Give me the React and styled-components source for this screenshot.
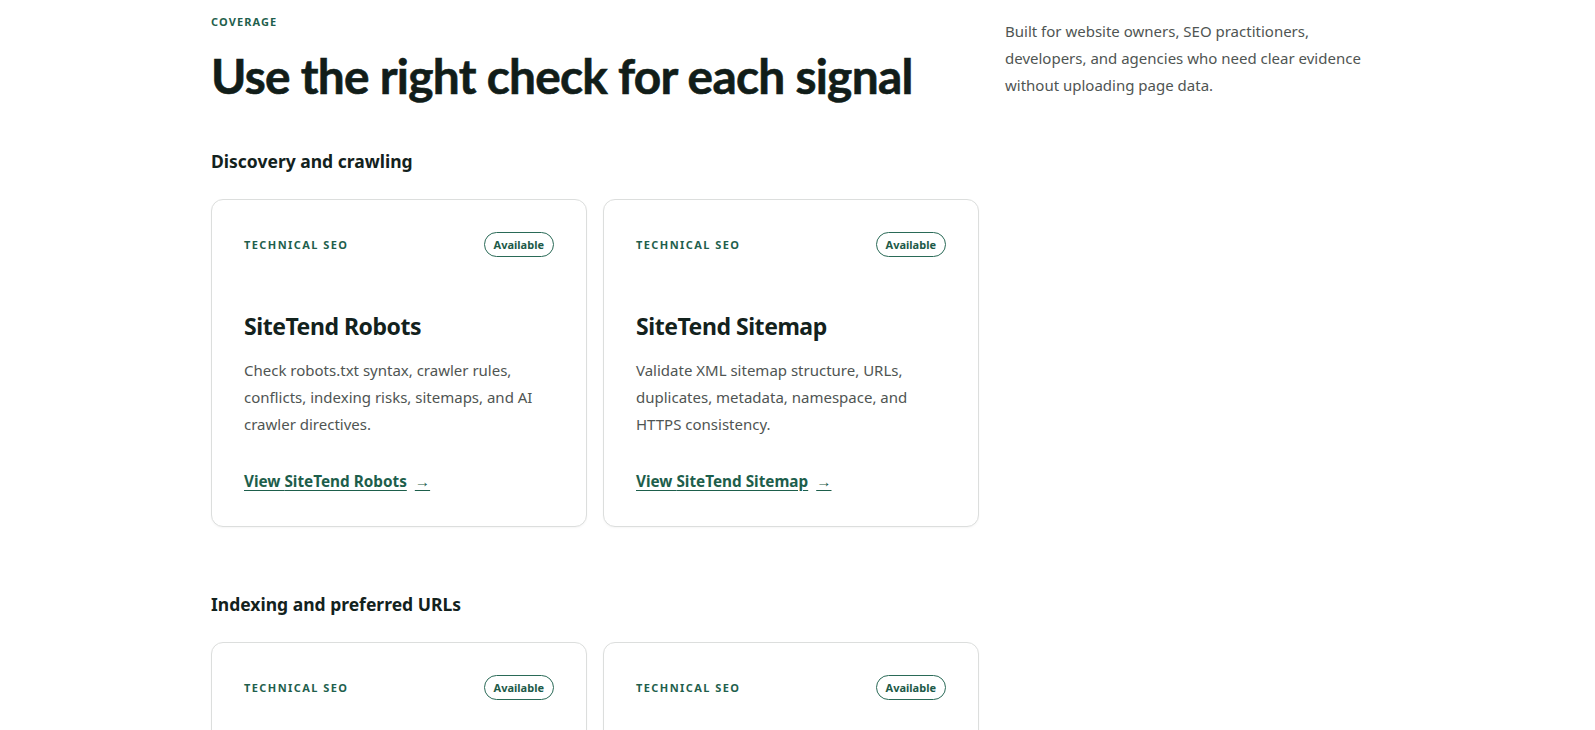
import React from 'react';
import styled, { createGlobalStyle } from 'styled-components';

const GlobalStyle = createGlobalStyle`
  html, body {
    margin: 0;
    padding: 0;
    background: #ffffff;
  }
  body {
    font-family: "Noto Sans", "Open Sans", sans-serif;
    color: #13221d;
  }
`;

const Page = styled.main`
  padding: 14px 0 80px 211px;
`;

const Header = styled.header`
  display: flex;
  align-items: flex-start;
  gap: 26px;
`;

const HeaderMain = styled.div`
  width: 768px;
`;

const Eyebrow = styled.div`
  font-size: 11px;
  font-weight: 700;
  letter-spacing: .1em;
  text-transform: uppercase;
  color: #1f5f4d;
  line-height: 16px;
`;

const Heading = styled.h1`
  margin: 16px 0 0;
  font-family: Lato, "Noto Sans", sans-serif;
  font-size: 47.8px;
  font-weight: 700;
  letter-spacing: -.015em;
  line-height: 60px;
  white-space: nowrap;
  color: #111d19;
  -webkit-text-stroke: .6px #111d19;
`;

const Intro = styled.p`
  margin: 4px 0 0;
  width: 370px;
  font-size: 15px;
  line-height: 27px;
  color: #4f5553;
`;

const Group = styled.section`
  margin-top: ${p => p.$first ? '43px' : '65px'};
  width: 768px;
`;

const GroupTitle = styled.h2`
  margin: 0 0 26px;
  font-size: 17.5px;
  font-weight: 700;
  line-height: 24px;
  color: #13221d;
`;

const Grid = styled.div`
  display: grid;
  grid-template-columns: repeat(2, 1fr);
  gap: 16px;
`;

const Card = styled.article`
  border: 1px solid #dcdedd;
  border-radius: 12px;
  padding: 32px 32px 33px;
  background: #fff;
  box-shadow: 0 1px 2px rgba(0, 0, 0, .04);
`;

const CardTop = styled.div`
  display: flex;
  align-items: center;
  justify-content: space-between;
`;

const Category = styled.span`
  font-size: 11px;
  font-weight: 700;
  letter-spacing: .13em;
  text-transform: uppercase;
  color: #1f5f4d;
`;

const Badge = styled.span`
  display: inline-flex;
  align-items: center;
  height: 23px;
  padding: 0 9px;
  border: 1px solid #2a6a57;
  border-radius: 999px;
  font-size: 11px;
  font-weight: 700;
  color: #1d5a48;
`;

const CardTitle = styled.h3`
  margin: 54px 0 0;
  font-size: 23px;
  font-weight: 700;
  letter-spacing: -.02em;
  line-height: 30px;
  color: #13221d;
`;

const CardText = styled.p`
  margin: 16px 0 0;
  font-size: 15px;
  line-height: 27px;
  color: #4f5553;
`;

const CardLink = styled.a`
  display: inline-block;
  margin-top: 31px;
  font-size: 15.3px;
  font-weight: 700;
  line-height: 24px;
  color: #1d5e4b;
  text-decoration: underline;
  text-underline-offset: 3px;
  cursor: pointer;
`;

const Arrow = styled.span`
  display: inline-block;
  margin-left: 8px;
  text-decoration: underline;
  text-underline-offset: 3px;
  font-weight: 400;
`;

const groups = [
  {
    title: 'Discovery and crawling',
    tools: [
      {
        name: 'SiteTend Robots',
        text: 'Check robots.txt syntax, crawler rules, conflicts, indexing risks, sitemaps, and AI crawler directives.',
      },
      {
        name: 'SiteTend Sitemap',
        text: 'Validate XML sitemap structure, URLs, duplicates, metadata, namespace, and HTTPS consistency.',
      },
    ],
  },
  {
    title: 'Indexing and preferred URLs',
    tools: [
      {
        name: 'SiteTend Canonical',
        text: 'Review canonical tags, preferred URL signals, redirects, and conflicting directives.',
      },
      {
        name: 'SiteTend Indexability',
        text: 'Check meta robots, X-Robots-Tag headers, status codes, and noindex signals.',
      },
    ],
  },
];

function ToolCard({ tool }) {
  return (
    <Card>
      <CardTop>
        <Category>Technical SEO</Category>
        <Badge>Available</Badge>
      </CardTop>
      <CardTitle>{tool.name}</CardTitle>
      <CardText>{tool.text}</CardText>
      <CardLink>
        View {tool.name}
        <Arrow>→</Arrow>
      </CardLink>
    </Card>
  );
}

export default function App() {
  return (
    <Page>
      <GlobalStyle />
      <Header>
        <HeaderMain>
          <Eyebrow>Coverage</Eyebrow>
          <Heading>Use the right check for each signal</Heading>
        </HeaderMain>
        <Intro>
          Built for website owners, SEO practitioners, developers, and agencies who need clear evidence without uploading page data.
        </Intro>
      </Header>
      {groups.map((g, i) => (
        <Group key={g.title} $first={i === 0}>
          <GroupTitle>{g.title}</GroupTitle>
          <Grid>
            {g.tools.map(t => <ToolCard key={t.name} tool={t} />)}
          </Grid>
        </Group>
      ))}
    </Page>
  );
}
